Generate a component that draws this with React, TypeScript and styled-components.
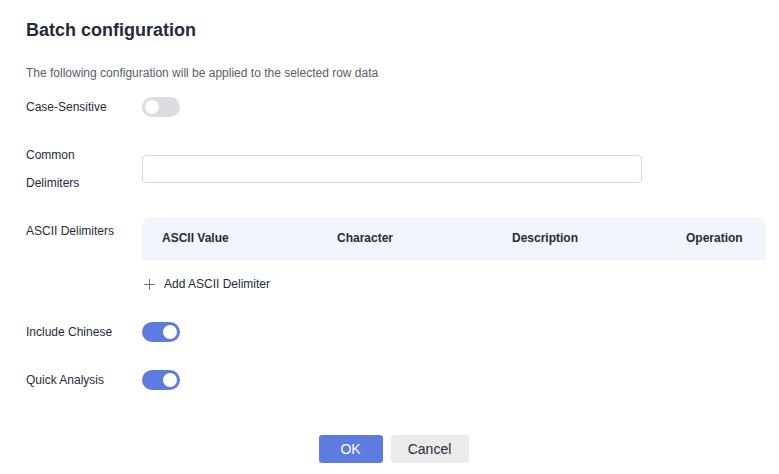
import React from "react";
import styled, { createGlobalStyle } from "styled-components";

const GlobalStyle = createGlobalStyle`
  body {
    margin: 0;
    background: #ffffff;
    font-family: "Liberation Sans", Arial, sans-serif;
    color: #252b3a;
  }
`;

const Dialog = styled.div`
  width: 779px;
  height: 474px;
  box-sizing: border-box;
  padding: 18px 26px 0 26px;
  background: #ffffff;
`;
const Title = styled.h2`
  margin: 0;
  font-size: 18px;
  line-height: 24px;
  font-weight: 700;
  color: #252b3a;
`;
const Subtitle = styled.p`
  margin: 22px 0 11px 0;
  font-size: 12px;
  line-height: 18px;
  color: #575d6c;
`;
const Form = styled.div`
  display: flex;
  flex-direction: column;
  gap: 20px;
`;
const Row = styled.div<{ $top?: boolean }>`
  display: flex;
  align-items: ${(p) => (p.$top ? "flex-start" : "center")};
`;
const Label = styled.label`
  flex: 0 0 116px;
  box-sizing: border-box;
  padding-right: 16px;
  font-size: 12px;
  line-height: 28px;
  color: #252b3a;
`;
const Control = styled.div`
  flex: 1;
  display: flex;
  flex-direction: column;
`;
const Track = styled.button<{ $on: boolean }>`
  position: relative;
  width: 38px;
  height: 20px;
  padding: 0;
  border: none;
  border-radius: 10px;
  background: ${(p) => (p.$on ? "#5e7ce0" : "#dcdde0")};
  cursor: pointer;
`;
const Knob = styled.span<{ $on: boolean }>`
  position: absolute;
  top: 3px;
  left: ${(p) => (p.$on ? "21px" : "3px")};
  width: 14px;
  height: 14px;
  border-radius: 50%;
  background: #ffffff;
`;
const TextInput = styled.input`
  width: 500px;
  height: 28px;
  box-sizing: border-box;
  border: 1px solid #d7d8da;
  border-radius: 4px;
  padding: 0 10px;
  font-size: 12px;
  outline: none;
`;
const TableHead = styled.div`
  width: 624px;
  height: 42px;
  display: grid;
  grid-template-columns: 175px 175px 174px 100px;
  align-items: center;
  background: #f2f5fc;
  border-radius: 8px 8px 0 0;
  border-bottom: 1px solid #eef0f5;
`;
const HeadCell = styled.div`
  padding-left: 20px;
  font-size: 12px;
  font-weight: 700;
  color: #252b3a;
`;
const AddButton = styled.button`
  margin-top: 10px;
  height: 28px;
  align-self: flex-start;
  display: flex;
  align-items: center;
  gap: 9px;
  padding: 0 0 0 2px;
  border: none;
  background: transparent;
  font-family: inherit;
  font-size: 12px;
  color: #252b3a;
  cursor: pointer;
`;
const Footer = styled.div`
  margin-top: 41px;
  display: flex;
  justify-content: center;
  gap: 8px;
  padding-left: 8px;
`;
const Button = styled.button<{ $primary?: boolean }>`
  height: 28px;
  min-width: ${(p) => (p.$primary ? "64px" : "78px")};
  border: none;
  border-radius: 3px;
  font-family: inherit;
  font-size: 14px;
  background: ${(p) => (p.$primary ? "#5e7ce0" : "#ebebeb")};
  color: ${(p) => (p.$primary ? "#ffffff" : "#252b3a")};
  cursor: pointer;
`;

const Switch = ({ on, onToggle }: { on: boolean; onToggle: () => void }) => (
  <Track $on={on} onClick={onToggle}>
    <Knob $on={on} />
  </Track>
);

const App = () => {
  const [caseSensitive, setCaseSensitive] = React.useState(false);
  const [chinese, setChinese] = React.useState(true);
  const [quick, setQuick] = React.useState(true);

  return (
    <>
      <GlobalStyle />
      <Dialog>
        <Title>Batch configuration</Title>
        <Subtitle>
          The following configuration will be applied to the selected row data
        </Subtitle>
        <Form>
          <Row>
            <Label>Case-Sensitive</Label>
            <Control>
              <Switch on={caseSensitive} onToggle={() => setCaseSensitive(!caseSensitive)} />
            </Control>
          </Row>
          <Row>
            <Label>Common Delimiters</Label>
            <Control>
              <TextInput />
            </Control>
          </Row>
          <Row $top>
            <Label>ASCII Delimiters</Label>
            <Control>
              <TableHead>
                <HeadCell>ASCII Value</HeadCell>
                <HeadCell>Character</HeadCell>
                <HeadCell>Description</HeadCell>
                <HeadCell>Operation</HeadCell>
              </TableHead>
              <AddButton>
                <svg width="11" height="11" viewBox="0 0 11 11">
                  <path d="M5.5 0v11M0 5.5h11" stroke="#71757f" strokeWidth="1" />
                </svg>
                Add ASCII Delimiter
              </AddButton>
            </Control>
          </Row>
          <Row>
            <Label>Include Chinese</Label>
            <Control>
              <Switch on={chinese} onToggle={() => setChinese(!chinese)} />
            </Control>
          </Row>
          <Row>
            <Label>Quick Analysis</Label>
            <Control>
              <Switch on={quick} onToggle={() => setQuick(!quick)} />
            </Control>
          </Row>
        </Form>
        <Footer>
          <Button $primary>OK</Button>
          <Button>Cancel</Button>
        </Footer>
      </Dialog>
    </>
  );
};

export default App;
